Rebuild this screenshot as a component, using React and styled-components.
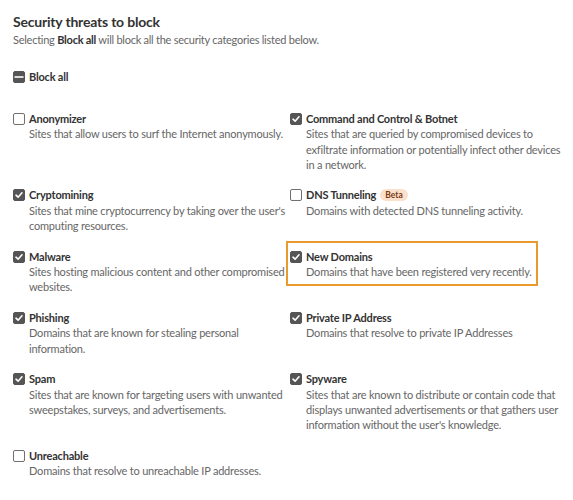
import React from 'react'
import styled, { createGlobalStyle } from 'styled-components'

const Global = createGlobalStyle`
  body {
    margin: 0;
    background: #fff;
    font-family: Lato, "Open Sans", sans-serif;
    letter-spacing: -0.2px;
  }
`

const Page = styled.div`
  padding: 12px 2px 0 13px;
  color: #333;
`

const Heading = styled.h2`
  margin: 0;
  font-size: 14px;
  line-height: 19px;
  font-weight: 700;
  color: #333;
`

const Sub = styled.p`
  margin: 1px 0 0;
  font-size: 11px;
  line-height: 15.4px;
  letter-spacing: -0.25px;
  color: #666;
  b { color: #333; font-weight: 700; }
`

const Grid = styled.div`
  display: grid;
  grid-template-columns: 272px 281px;
  column-gap: 5px;
  row-gap: 15px;
  margin-top: 26px;
`

const Item = styled.label`
  position: relative;
  display: grid;
  grid-template-columns: 12px 1fr;
  column-gap: 4px;
  align-items: start;
  margin-top: ${p => p.$top || 0}px;
`

const Box = styled.span`
  box-sizing: border-box;
  width: 12px;
  height: 12px;
  margin-top: 2px;
  border-radius: 2px;
  border: 1px solid ${p => (p.$on ? '#555' : '#707070')};
  background: ${p => (p.$on ? '#555' : '#fff')};
  display: flex;
  align-items: center;
  justify-content: center;
`

const Text = styled.div`
  font-size: 11px;
  line-height: 15.4px;
`

const Name = styled.div`
  font-weight: 700;
  color: #333;
  display: flex;
  align-items: center;
  gap: 4px;
`

const Desc = styled.div`
  color: #666;
`

const Badge = styled.span`
  font-size: 8.5px;
  line-height: 12px;
  font-weight: 700;
  letter-spacing: 0;
  padding: 0 5px;
  border-radius: 7px;
  background: #fbe1cc;
  color: #7a3a16;
`

const Highlight = styled.span`
  position: absolute;
  left: -4px;
  top: -8px;
  width: 248px;
  height: 41px;
  border: 2px solid #e89b2c;
  pointer-events: none;
`

const Check = () => (
  <svg width="10" height="10" viewBox="0 0 10 10">
    <path d="M2 5.2 L4.1 7.2 L8 2.8" fill="none" stroke="#fff" strokeWidth="1.6" strokeLinecap="round" strokeLinejoin="round" />
  </svg>
)

const Dash = () => (
  <svg width="10" height="10" viewBox="0 0 10 10">
    <path d="M0.5 5 H9.5" stroke="#fff" strokeWidth="1.6" />
  </svg>
)

const Checkbox = ({ on, mixed }) => (
  <Box $on={on || mixed}>{mixed ? <Dash /> : on ? <Check /> : null}</Box>
)

const threats = [
  { name: 'Anonymizer', on: false, desc: 'Sites that allow users to surf the Internet anonymously.' },
  { name: 'Command and Control & Botnet', on: true, desc: 'Sites that are queried by compromised devices to exfiltrate information or potentially infect other devices in a network.' },
  { name: 'Cryptomining', on: true, desc: "Sites that mine cryptocurrency by taking over the user's computing resources." },
  { name: 'DNS Tunneling', on: false, beta: true, desc: 'Domains with detected DNS tunneling activity.' },
  { name: 'Malware', on: true, desc: 'Sites hosting malicious content and other compromised websites.' },
  { name: 'New Domains', on: true, highlight: true, desc: 'Domains that have been registered very recently.' },
  { name: 'Phishing', on: true, desc: 'Domains that are known for stealing personal information.' },
  { name: 'Private IP Address', on: true, desc: 'Domains that resolve to private IP Addresses' },
  { name: 'Spam', on: true, desc: 'Sites that are known for targeting users with unwanted sweepstakes, surveys, and advertisements.' },
  { name: 'Spyware', on: true, desc: "Sites that are known to distribute or contain code that displays unwanted advertisements or that gathers user information without the user's knowledge." },
  { name: 'Unreachable', on: false, desc: 'Domains that resolve to unreachable IP addresses.' },
]

export default function App() {
  return (
    <Page>
      <Global />
      <Heading>Security threats to block</Heading>
      <Sub>Selecting <b>Block all</b> will block all the security categories listed below.</Sub>
      <Item $top={22}>
        <Checkbox mixed />
        <Text><Name>Block all</Name></Text>
      </Item>
      <Grid>
        {threats.map(t => (
          <Item key={t.name}>
            {t.highlight && <Highlight />}
            <Checkbox on={t.on} />
            <Text>
              <Name>
                {t.name}
                {t.beta && <Badge>Beta</Badge>}
              </Name>
              <Desc>{t.desc}</Desc>
            </Text>
          </Item>
        ))}
      </Grid>
    </Page>
  )
}
